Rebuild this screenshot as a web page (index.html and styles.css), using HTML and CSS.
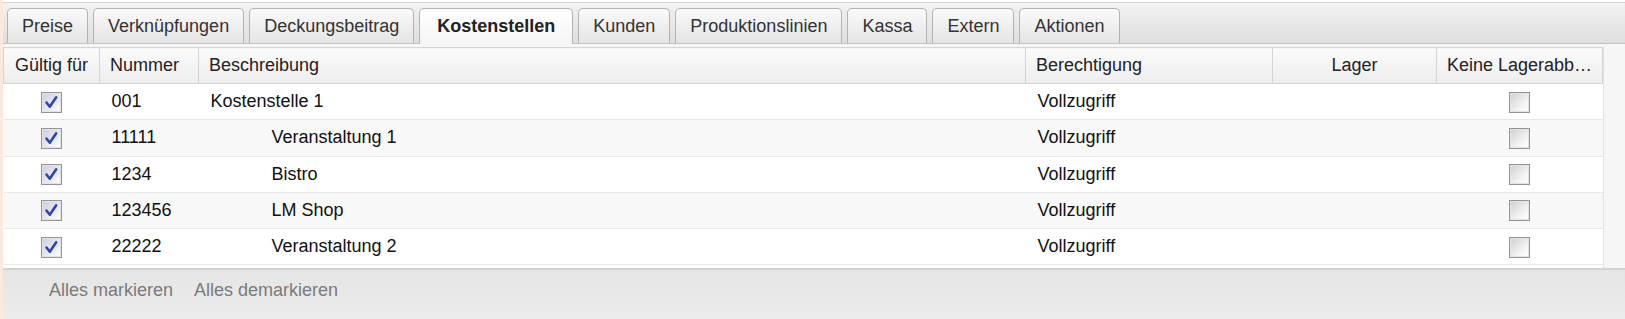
FILE: index.html
```html
<!DOCTYPE html>
<html lang="de">
<head>
    <meta charset="UTF-8">
    <meta name="viewport" content="width=device-width, initial-scale=1.0">
    <title>Kostenstellen</title>
    <link rel="stylesheet" href="styles.css">
</head>
<body>
<div class="app">
    <div class="tabbar">
        <div class="tab">Preise</div>
        <div class="tab">Verknüpfungen</div>
        <div class="tab">Deckungsbeitrag</div>
        <div class="tab active">Kostenstellen</div>
        <div class="tab">Kunden</div>
        <div class="tab">Produktionslinien</div>
        <div class="tab">Kassa</div>
        <div class="tab">Extern</div>
        <div class="tab">Aktionen</div>
    </div>

    <div class="panel">
        <div class="grid">
            <table>
                <colgroup>
                    <col class="c-valid">
                    <col class="c-nr">
                    <col class="c-desc">
                    <col class="c-perm">
                    <col class="c-store">
                    <col class="c-nostock">
                </colgroup>
                <thead>
                    <tr>
                        <th class="center">Gültig für</th>
                        <th>Nummer</th>
                        <th>Beschreibung</th>
                        <th>Berechtigung</th>
                        <th class="center">Lager</th>
                        <th class="center" title="Keine Lagerabbuchung">Keine Lagerabb…</th>
                    </tr>
                </thead>
                <tbody id="rows"></tbody>
            </table>
        </div>
    </div>

    <div class="footer">
        <span class="link">Alles markieren</span>
        <span class="link">Alles demarkieren</span>
    </div>
</div>

<script>
// cost centres shown in the grid
const costCenters = [
    { nr: "001",    name: "Kostenstelle 1",  child: false },
    { nr: "11111",  name: "Veranstaltung 1", child: true },
    { nr: "1234",   name: "Bistro",          child: true },
    { nr: "123456", name: "LM Shop",         child: true },
    { nr: "22222",  name: "Veranstaltung 2", child: true }
];

const check = '<svg viewBox="0 0 21 21" width="21" height="21"><path d="M5.5 10.5 L8.8 14.8 L15.2 5.2" fill="none" stroke="#2f42a8" stroke-width="2.5" stroke-linecap="round" stroke-linejoin="round"/></svg>';

const tbody = document.getElementById('rows');
costCenters.forEach(cc => {
    const row = document.createElement('tr');
    row.innerHTML = `
        <td class="center"><span class="cb checked">${check}</span></td>
        <td>${cc.nr}</td>
        <td class="${cc.child ? 'child' : ''}">${cc.name}</td>
        <td>Vollzugriff</td>
        <td></td>
        <td class="center"><span class="cb"></span></td>
    `;
    tbody.appendChild(row);
});
</script>
</body>
</html>
```

FILE: styles.css
```css
body { margin: 0; font-family: "Liberation Sans", Arial, sans-serif; font-size: 18px; color: #111; background: #fff; }
.app { border-left: 3px solid #fbeadb; min-height: 319px; display: flex; flex-direction: column; }

.tabbar { margin-top: 2px; border-top: 1px solid #d6d6d6; border-bottom: 1px solid #c4c4c4; height: 40px; padding-left: 4px; display: flex; align-items: flex-end; gap: 5px; background: linear-gradient(#f2f2f2, #dedede); }
.tab { height: 35px; box-sizing: border-box; padding: 0 14px; display: flex; align-items: center; border: 1px solid #b3b3b3; border-bottom: none; border-radius: 5px 5px 0 0; background: linear-gradient(#fafafa, #e4e4e4); color: #333; }
.tab.active { height: 36px; margin-bottom: -1px; padding: 0 17px; font-weight: bold; color: #222; background: linear-gradient(#ffffff, #f5f5f5); }

.panel { background: #f6f6f6; padding-top: 3px; }
.grid { background: #fff; width: 1600px; padding-bottom: 3px; border-right: 1px solid #e2e2e2; }
table { border-collapse: collapse; table-layout: fixed; width: 1599px; }
.c-valid { width: 96px; }
.c-nr { width: 99px; }
.c-desc { width: 827px; }
.c-perm { width: 247px; }
.c-store { width: 164px; }
.c-nostock { width: 166px; }

th { height: 35px; padding: 0 10px; font-weight: normal; text-align: left; color: #222; white-space: nowrap; overflow: hidden; border: 1px solid #d4d4d4; background: linear-gradient(#fbfbfb, #ededed); }
th:last-child { padding: 0 2px; }
td { height: 35.3px; padding: 0 12px; border-bottom: 1px solid #e8e8e8; white-space: nowrap; }
tbody tr:nth-child(even) td { background: #f8f8f8; }
.center { text-align: center; }
td.child { padding-left: 73px; }

.cb { display: inline-block; width: 21px; height: 21px; box-sizing: border-box; vertical-align: middle; border: 1px solid #949494; box-shadow: inset 0 0 0 1px #e4e4e4; background: linear-gradient(135deg, #cfcfcf, #f6f6f6 70%, #ffffff); }
.cb.checked { background: linear-gradient(135deg, #c9cde0, #eef0f6 70%, #ffffff); }
.cb svg { display: block; margin: -1px; }

.footer { flex: 1; border-top: 2px solid #d2d2d2; padding: 9px 0 0 46px; line-height: 22px; display: flex; gap: 21px; background: linear-gradient(#e5e5e5, #ececec); color: #7a7a7a; }
```
